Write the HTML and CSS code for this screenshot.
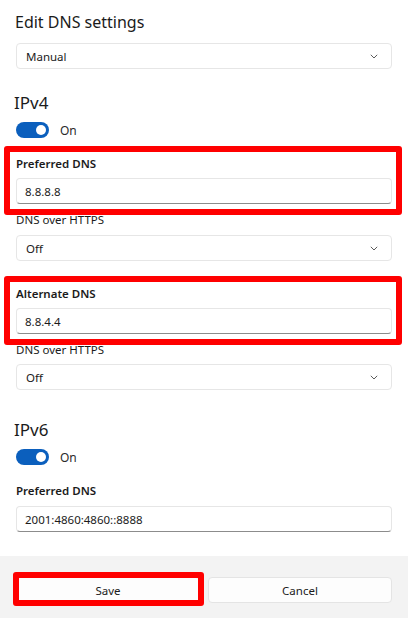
FILE: index.html
```html
<html>
  <head>
    <title>Edit DNS settings</title>
    <link rel="stylesheet" href="styles.css">
  </head>
  <body>
    <div class="page">
      <h1 class="title">Edit DNS settings</h1>
      <div class="select select-mode">
        <span>Manual</span>
        <svg class="chev" width="8" height="5" viewBox="0 0 8 5"><path d="M0.8 0.8 L4 4 L7.2 0.8" fill="none" stroke="#5c5c5c" stroke-width="1"/></svg>
      </div>

      <h2 class="section">IPv4</h2>
      <div class="toggle-row">
        <span class="toggle"><span class="knob"></span></span>
        <span class="toggle-text">On</span>
      </div>

      <div class="group mark group-first">
        <div class="label strong">Preferred DNS</div>
        <div class="input">8.8.8.8</div>
      </div>
      <div class="label doh">DNS over HTTPS</div>
      <div class="select select-doh">
        <span>Off</span>
        <svg class="chev" width="8" height="5" viewBox="0 0 8 5"><path d="M0.8 0.8 L4 4 L7.2 0.8" fill="none" stroke="#5c5c5c" stroke-width="1"/></svg>
      </div>

      <div class="group mark group-second">
        <div class="label strong">Alternate DNS</div>
        <div class="input">8.8.4.4</div>
      </div>
      <div class="label doh">DNS over HTTPS</div>
      <div class="select select-doh2">
        <span>Off</span>
        <svg class="chev" width="8" height="5" viewBox="0 0 8 5"><path d="M0.8 0.8 L4 4 L7.2 0.8" fill="none" stroke="#5c5c5c" stroke-width="1"/></svg>
      </div>

      <h2 class="section section-v6">IPv6</h2>
      <div class="toggle-row">
        <span class="toggle"><span class="knob"></span></span>
        <span class="toggle-text">On</span>
      </div>

      <div class="group group-v6">
        <div class="label strong">Preferred DNS</div>
        <div class="input">2001:4860:4860::8888</div>
      </div>
    </div>

    <div class="footer">
      <div class="btn btn-save">Save</div>
      <div class="btn">Cancel</div>
    </div>
  </body>
</html>
```

FILE: styles.css
```css
body {
  margin: 0;
  background: #ffffff;
  font-family: "Noto Sans", "Open Sans", sans-serif;
  color: #1b1b1b;
  font-size: 12px;
}
.page {
  padding: 0 16px;
  overflow: hidden;
}
.title {
  margin: 12px 0 0 -1px;
  font-size: 16px;
  font-weight: 400;
  line-height: 20px;
}
.select {
  box-sizing: border-box;
  height: 26px;
  background: #ffffff;
  border: 1px solid #e6e6e6;
  border-radius: 4px;
  display: flex;
  align-items: center;
  justify-content: space-between;
  padding: 0 13px 0 9px;
  font-size: 11.5px;
}
.select-mode {
  margin-top: 11px;
}
.select-doh {
  margin-top: 7px;
}
.select-doh2 {
  margin-top: 6px;
}
.chev {
  display: block;
}
.section {
  margin: 22px 0 0 -2px;
  font-size: 17px;
  font-weight: 400;
  line-height: 24px;
}
.section-v6 {
  margin-top: 28px;
}
.toggle-row {
  margin-top: 7px;
  height: 16px;
  display: flex;
  align-items: center;
  gap: 11px;
}
.toggle {
  width: 33px;
  height: 16px;
  border-radius: 8px;
  background: #0b5fbd;
  display: flex;
  align-items: center;
  justify-content: flex-end;
  padding-right: 3px;
  box-sizing: border-box;
}
.knob {
  width: 10px;
  height: 10px;
  border-radius: 50%;
  background: #ffffff;
}
.toggle-text {
  font-size: 12px;
  color: #2a2a2a;
}
.group {
  position: relative;
  margin-top: 18px;
}
.group-second {
  margin-top: 25px;
}
.mark::after {
  content: "";
  position: absolute;
  top: -10px;
  bottom: -11px;
  left: -12px;
  right: -10px;
  border: 6px solid #ff0000;
  border-radius: 3px;
}
.label {
  line-height: 16px;
  font-size: 11.5px;
}
.strong {
  font-weight: 600;
}
.doh {
  margin-top: 8px;
}
.input {
  box-sizing: border-box;
  margin-top: 6px;
  height: 26px;
  background: #ffffff;
  border: 1px solid #e6e6e6;
  border-bottom: 1px solid #8c8c8c;
  border-radius: 4px;
  display: flex;
  align-items: center;
  padding: 0 8px;
  font-size: 11.5px;
}
.group-v6 .input {
  margin-top: 7px;
}
.footer {
  margin-top: 24px;
  height: 62px;
  box-sizing: border-box;
  padding: 21px 16px 0;
  background: #f3f3f3;
  display: grid;
  grid-template-columns: 1fr 1fr;
  gap: 8px;
  align-items: start;
}
.btn {
  position: relative;
  box-sizing: border-box;
  height: 26px;
  background: #fdfdfd;
  border: 1px solid #e4e4e4;
  border-radius: 4px;
  display: flex;
  align-items: center;
  justify-content: center;
  font-size: 11.5px;
}
.btn-save::after {
  content: "";
  position: absolute;
  top: -6px;
  bottom: -4px;
  left: -4px;
  right: -5px;
  border: 6px solid #ff0000;
  border-radius: 3px;
}
```
